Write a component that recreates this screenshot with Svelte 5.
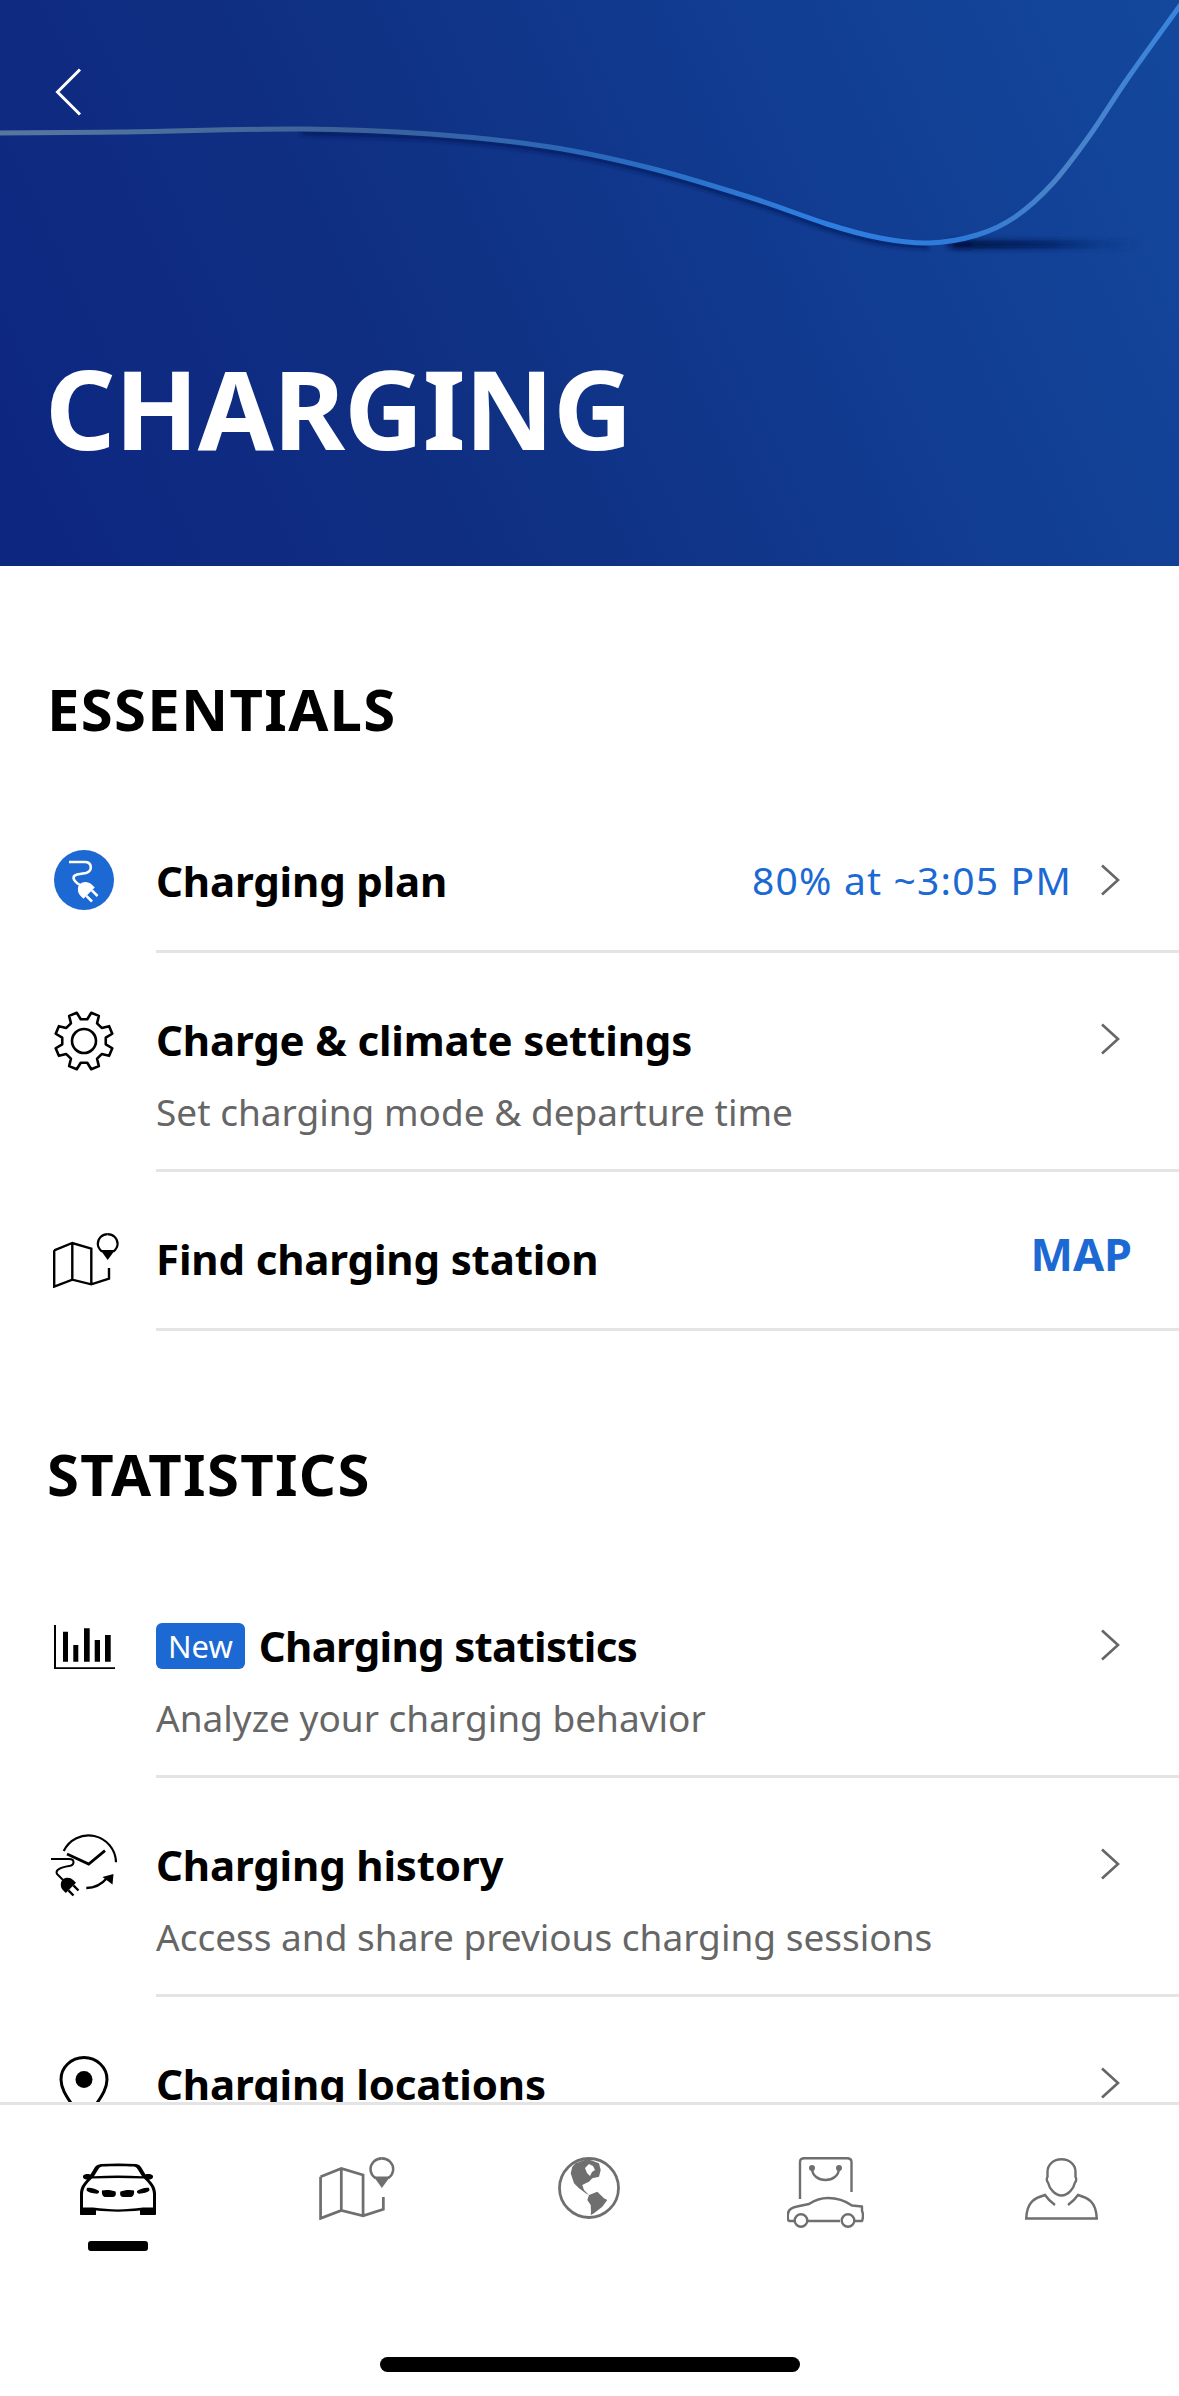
<script>
  const gearPts = [];
  const n = 8;
  for (let i = 0; i < n; i++) {
    const a = (i / n) * Math.PI * 2 + Math.PI / 8;
    const w = Math.PI / n;
    const p = (r, t) => `${(30 + r * Math.cos(t)).toFixed(2)} ${(30 + r * Math.sin(t)).toFixed(2)}`;
    gearPts.push(`${i ? 'L' : 'M'}${p(22, a - w * 0.62)} L${p(29.2, a - w * 0.36)} L${p(29.2, a + w * 0.36)} L${p(22, a + w * 0.62)}`);
  }
  const gear = gearPts.join(' ') + ' Z';

  const cablePts = [[-10,133],[120,132],[301,129],[430,134],[550,147],[650,168],[752,198],[827,224],[880,238],[929,243],[977,235],[1015,217],[1053,183],[1090,135],[1128,78],[1179,7],[1200,-23]];
  function smooth(pts) {
    let d = `M${pts[0][0]} ${pts[0][1]}`;
    for (let i = 0; i < pts.length - 1; i++) {
      const p0 = pts[Math.max(i - 1, 0)], p1 = pts[i], p2 = pts[i + 1], p3 = pts[Math.min(i + 2, pts.length - 1)];
      const c1 = [p1[0] + (p2[0] - p0[0]) / 6, p1[1] + (p2[1] - p0[1]) / 6];
      const c2 = [p2[0] - (p3[0] - p1[0]) / 6, p2[1] - (p3[1] - p1[1]) / 6];
      d += `C${c1[0].toFixed(1)} ${c1[1].toFixed(1)} ${c2[0].toFixed(1)} ${c2[1].toFixed(1)} ${p2[0]} ${p2[1]}`;
    }
    return d;
  }
  const cable = smooth(cablePts);
  const cableShadow = smooth(cablePts.slice(2, 10).map(([x, y]) => [x, y + 4]));
</script>

{#snippet chevron()}
  <svg class="chev" viewBox="0 0 20 32"><path d="M2 1.5 L18 16 L2 30.5" /></svg>
{/snippet}

{#snippet plug()}
  <path d="M-8 3H8V-1C8 -6 4 -10 0 -10C-4 -10 -8 -6 -8 -1Z" />
  <rect x="-5.2" y="3" width="2.6" height="8" />
  <rect x="2.6" y="3" width="2.6" height="8" />
{/snippet}

{#snippet mapIcon(cls, color)}
  <svg class={cls} viewBox="0 0 66 55" style="color:{color}">
    <path fill="none" stroke="currentColor" stroke-width="2.4" d="M1.2 17.3V53.6L19.3 46.7L38.3 51.3L56 45.7V35M1.2 17.3L19.3 10L38.3 15.7V51.3M19.3 10V46.7" />
    <path fill="none" stroke="currentColor" stroke-width="2.2" d="M54.7 1.2C49 1.2 44.8 5.6 44.8 10.8C44.8 14.2 46.5 16.6 49.2 18.6" />
    <path fill="none" stroke="currentColor" stroke-width="2.2" d="M54.7 1.2C60.4 1.2 64.6 5.6 64.6 10.8C64.6 14.2 62.9 16.6 60.2 18.6" />
    <path fill="currentColor" d="M47.5 17H62L54.7 27Z" />
  </svg>
{/snippet}

<div class="page">
  <div class="scroll">
    <header class="hero">
      <svg class="curve" viewBox="0 0 1179 566">
        <defs>
          <linearGradient id="cable" x1="0" x2="1179" y1="0" y2="0" gradientUnits="userSpaceOnUse">
            <stop offset="0" stop-color="#58779f" />
            <stop offset="0.3" stop-color="#3c6299" />
            <stop offset="0.5" stop-color="#2a68ba" />
            <stop offset="0.7" stop-color="#2f7fe2" />
            <stop offset="0.82" stop-color="#2f7ad8" />
            <stop offset="0.9" stop-color="#4a82c8" />
            <stop offset="1" stop-color="#3a84de" />
          </linearGradient>
          <filter id="blur" x="-20%" y="-300%" width="140%" height="700%"><feGaussianBlur stdDeviation="4 2.5" /></filter>
          <filter id="blur2" x="-20%" y="-50%" width="140%" height="200%"><feGaussianBlur stdDeviation="2.2" /></filter>
          <filter id="blur3" x="-5%" y="-20%" width="110%" height="140%"><feGaussianBlur stdDeviation="0.5" /></filter>
          <linearGradient id="shade" x1="955" x2="1140" y1="0" y2="0" gradientUnits="userSpaceOnUse">
            <stop offset="0" stop-color="#031040" stop-opacity="1" />
            <stop offset="0.5" stop-color="#071d5c" stop-opacity="0.75" />
            <stop offset="1" stop-color="#0d2f7a" stop-opacity="0" />
          </linearGradient>
        </defs>
        <path d="M950 240H1140V249H950Z" fill="url(#shade)" filter="url(#blur)" />
        <path d={cableShadow} fill="none" stroke="#06185a" stroke-opacity="0.75" stroke-width="5" filter="url(#blur2)" />
        <path d={cable} fill="none" stroke="url(#cable)" stroke-width="5" filter="url(#blur3)" />
      </svg>
      <svg class="back" viewBox="0 0 27 48"><path d="M25 1.5 L2.5 24 L25 46.5" /></svg>
      <h1>CHARGING</h1>
    </header>

    <main>
      <h2>ESSENTIALS</h2>

      <div class="row short">
        <div class="ic plugic">
          <svg class="s60" viewBox="0 0 60 60">
            <circle cx="30" cy="30" r="30" fill="#1c69d4" />
            <path d="M15 12H31C38 12 39 21 32 23L23 24.5C18 26 18 30 26 35" fill="none" stroke="#fff" stroke-width="2.6" />
            <g transform="translate(33 41) rotate(-45)" fill="#fff">{@render plug()}</g>
          </svg>
        </div>
        <div class="body"><div class="title">Charging plan</div></div>
        <span class="value">80% at ~3:05 PM</span>
        {@render chevron()}
      </div>

      <div class="row tall">
        <div class="ic">
          <svg class="s60" viewBox="0 0 60 60"><path d={gear} fill="none" stroke="#000" stroke-width="2.6" stroke-linejoin="round" /><circle cx="30" cy="30" r="12" fill="none" stroke="#000" stroke-width="2.6" /></svg>
        </div>
        <div class="body">
          <div class="title">Charge &amp; climate settings</div>
          <div class="sub">Set charging mode &amp; departure time</div>
        </div>
        {@render chevron()}
      </div>

      <div class="row short">
        <div class="ic">{@render mapIcon('rowmap', '#000')}</div>
        <div class="body"><div class="title">Find charging station</div></div>
        <span class="map">MAP</span>
      </div>

      <h2>STATISTICS</h2>

      <div class="row tall">
        <div class="ic">
          <svg class="bars" viewBox="0 0 61 44">
            <path d="M1 0V43.2H61" fill="none" stroke="#000" stroke-width="2" />
            <path d="M9 6.7h5v30h-5zM19.3 20h5v16.7h-5zM30 3.3h5.7v33.4H30zM40.7 15h5.3v21.7h-5.3zM51 10h5.7v26.7H51z" fill="#000" />
          </svg>
        </div>
        <div class="body">
          <div class="title"><span class="badge">New</span><span class="tight">Charging statistics</span></div>
          <div class="sub">Analyze your charging behavior</div>
        </div>
        {@render chevron()}
      </div>

      <div class="row tall">
        <div class="ic">
          <svg class="hist" viewBox="0 0 66 66">
            <path d="M12.7 17A27.5 27.5 0 0 1 65 28.3" fill="none" stroke="#000" stroke-width="2.2" />
            <path d="M16 20L37.7 30L54 16.7" fill="none" stroke="#000" stroke-width="2.8" />
            <path d="M35.3 54C44 54 51 50 56 44" fill="none" stroke="#000" stroke-width="2.4" />
            <path d="M51.5 43L62.5 40L61.5 50.5Z" fill="#000" />
            <path d="M0 25H18C24 25 24 31 18 32C9 33.5 4 36 6 40L12 46" fill="none" stroke="#000" stroke-width="2" />
            <g transform="translate(18 52) rotate(-45) scale(.9)" fill="#000">{@render plug()}</g>
          </svg>
        </div>
        <div class="body">
          <div class="title">Charging history</div>
          <div class="sub">Access and share previous charging sessions</div>
        </div>
        {@render chevron()}
      </div>

      <div class="row tall last">
        <div class="ic">
          <svg class="pin" viewBox="0 0 50 66">
            <path d="M25 1.5C12 1.5 2 11.5 2 23.5C2 33 8 41 14 50L25 66L36 50C42 41 48 33 48 23.5C48 11.5 38 1.5 25 1.5Z" fill="none" stroke="#000" stroke-width="3" />
            <circle cx="25" cy="23.5" r="8.5" fill="#000" />
          </svg>
        </div>
        <div class="body"><div class="title">Charging locations</div></div>
        {@render chevron()}
      </div>
    </main>
  </div>

  <nav class="tabs">
    <div class="tab">
      <svg class="t-car" viewBox="0 0 76 52">
        <path fill-rule="evenodd" d="M21 1C32 .2 45 .2 56 1C58.5 1.3 60 2.6 61 4L65.5 11.6C67 10.6 72 10.7 73 13C73.5 15 71.5 16.5 69 16.5C72 20 75.5 23 76 30V51C76 51.6 75.6 52 75 52H61C60 52 60 51.5 60 51V47.5C46 49 30 49 16 47.5V51C16 51.5 16 52 15 52H1C.4 52 0 51.6 0 51V30C.5 23 4 20 7 16.5C4.5 16.5 2.5 15 3 13C4 10.7 9 10.6 10.5 11.6L15 4C16 2.6 18.5 1.3 21 1ZM22.5 3.6C20.5 3.8 19.5 4.6 18.5 6L14 13.2C30 12.4 46 12.4 62 13.2L57.5 6C56.5 4.6 55.5 3.8 53.5 3.6C44 3 32 3 22.5 3.6ZM12 15.6C8 19.6 3.4 23.5 3 31V44.6H13C30 47 46 47 63 44.6H73V31C72.6 23.5 68 19.6 64 15.6C46 14.8 30 14.8 12 15.6Z" />
        <path d="M7 25C10 24 16 26 19 28C19.5 30 18 31 15 30.5C11 30 7 29 6.5 27ZM69 25C66 24 60 26 57 28C56.5 30 58 31 61 30.5C65 30 69 29 69.5 27ZM22 27.5C26 26.5 32 27 35.5 28.5C36.5 31 35.5 34 33 34H25C22.5 34 21.5 30 22 27.5ZM54 27.5C50 26.5 44 27 40.5 28.5C39.5 31 40.5 34 43 34H51C53.5 34 54.5 30 54 27.5Z" />
      </svg>
      <span class="ind"></span>
    </div>
    <div class="tab">{@render mapIcon('t-map', '#6f6f6f')}</div>
    <div class="tab">
      <svg class="t-globe" viewBox="0 0 62 62">
        <circle cx="31" cy="31" r="29.5" fill="#fff" stroke="#6f6f6f" stroke-width="2.8" />
        <path fill="#6f6f6f" fill-rule="evenodd" d="M17.7 6.3L29.3 2L41 6.3L42.7 13L41 19.7L34.3 21.3L31 24.7L27.7 26.3L24.3 28L26 33L31 38L27.7 36.3L21 31.3L16 26.3L12.7 16.3L14.3 9.7ZM27 11L31 7L35 9L37 13L34 15L32 19L29 16Z" />
        <path fill="#6f6f6f" d="M31 38L39.3 34.7L46 41.3L49.3 43L44.3 49.7L36 56.3L32.7 58L33 55L32.7 48L29.3 43Z" />
      </svg>
    </div>
    <div class="tab">
      <svg class="t-bag" viewBox="0 0 77 71" fill="none" stroke="#6f6f6f" stroke-width="2.4">
        <path d="M13 42V5C13 2.5 15 1.2 17.5 1.2H60C62.5 1.2 64.5 2.5 64.5 5V35" />
        <path d="M25 11C25 27 52 27 52 11" />
        <circle cx="25" cy="11" r="1.8" fill="#6f6f6f" /><circle cx="52" cy="11" r="1.8" fill="#6f6f6f" />
        <path d="M8 64H2.5C.8 64 .8 62 .8 58C.8 53 4 50.5 10 49.5L22 47C28 43 33 41 41 41C52 41 60 45 65 48.5L75 49.5V54C76.5 56 76 62 75 64H68M21 64H53" stroke-linejoin="round" />
        <circle cx="14" cy="63.5" r="6.3" /><circle cx="61" cy="63.5" r="6.3" />
      </svg>
    </div>
    <div class="tab">
      <svg class="t-user" viewBox="0 0 73 62" fill="none" stroke="#6f6f6f" stroke-width="2.4">
        <path d="M36.5 1.2C28.5 1.2 22.5 6.5 22.5 14V19C21.5 20 21.5 23 23 24.5C24.5 31 30 37.5 36.5 37.5C43 37.5 48.5 31 50 24.5C51.5 23 51.5 20 50.5 19V14C50.5 6.5 44.5 1.2 36.5 1.2Z" />
        <path d="M30 47C26 44 22 40 20 37C10 40 2 43 1.2 60.5H71.8C71 43 63 40 53 37C51 40 47 44 43 47" />
      </svg>
    </div>
    <div class="home"></div>
  </nav>
</div>

<style>
  :global(body) { margin: 0; background: #fff; }
  .page {
    width: 1179px;
    height: 2396px;
    display: flex;
    flex-direction: column;
    overflow: hidden;
    font-family: "Noto Sans", sans-serif;
    color: #000;
    background: #fff;
  }
  .scroll { flex: 1; min-height: 0; overflow: hidden; }
  .hero {
    position: relative;
    height: 566px;
    background: linear-gradient(65deg, #0d2680 0%, #0f2f82 35%, #113d92 70%, #13489d 100%);
    display: flex;
    align-items: flex-end;
    padding: 0 45px;
    box-sizing: border-box;
  }
  .curve { position: absolute; inset: 0; width: 100%; height: 100%; }
  .back { position: absolute; left: 55px; top: 68px; width: 27px; height: 48px; fill: none; stroke: #fff; stroke-width: 3; }
  h1 {
    position: relative;
    margin: 0 0 99px;
    font-size: 110px;
    line-height: 120px;
    font-weight: 700;
    color: #fff;
    letter-spacing: -1px;
  }
  h2 {
    margin: 0;
    padding: 110px 47px 52px;
    font-size: 58px;
    line-height: 66px;
    font-weight: 700;
    letter-spacing: 1.3px;
  }
  .row {
    position: relative;
    display: flex;
    align-items: flex-start;
    box-sizing: border-box;
    padding-right: 39px;
  }
  .row.short { height: 159px; }
  .row.tall { height: 219px; }
  .row::after {
    content: "";
    position: absolute;
    left: 156px;
    right: 0;
    bottom: 0;
    height: 3px;
    background: #e4e4e4;
  }
  .ic { width: 156px; flex: none; display: flex; justify-content: center; padding: 58px 0 0 12px; box-sizing: border-box; }
  .plugic { padding-top: 56px; }
  .ic > svg { display: block; }
  .s60 { width: 60px; height: 60px; }
  :global(.rowmap) { width: 66px; height: 55px; margin: 3px 0 0 3px; }
  .bars { width: 61px; height: 44px; margin-top: 8px; }
  .hist { width: 66px; height: 66px; margin-top: -2px; }
  .pin { width: 50px; height: 66px; margin-top: 1px; }
  .body { flex: 1; min-width: 0; padding-top: 62.5px; }
  .title { font-size: 42px; line-height: 48px; font-weight: 700; display: flex; align-items: center; letter-spacing: -0.15px; }
  .tight { letter-spacing: -0.7px; }
  .sub { font-size: 37px; line-height: 48px; color: #666; margin-top: 24px; }
  .value { font-size: 39px; line-height: 48px; letter-spacing: 1.2px; color: #1c69d4; margin: 62px 28px 0 0; }
  .map { font-size: 45px; line-height: 48px; font-weight: 700; color: #1c69d4; margin: 58px 8px 0 0; }
  .chev { width: 20px; height: 32px; margin: 70px 20px 0 0; fill: none; stroke: #666; stroke-width: 2.6; flex: none; }
  .badge {
    background: #1c69d4;
    color: #fff;
    font-size: 31px;
    line-height: 46px;
    font-weight: 400;
    letter-spacing: 0;
    padding: 0 12px;
    border-radius: 6px;
    margin-right: 14px;
  }
  .tabs {
    position: relative;
    flex: none;
    height: 294px;
    border-top: 3px solid #e4e4e4;
    box-sizing: border-box;
    background: #fff;
    display: grid;
    grid-template-columns: repeat(5, 1fr);
    align-items: start;
  }
  .tab { display: flex; flex-direction: column; align-items: center; padding-top: 52px; }
  .tab svg { display: block; fill: #000; }
  .t-car { width: 76px; height: 52px; margin-top: 6px; }
  :global(.t-map) { width: 76px; height: 63px; margin-left: 6px; }
  .t-globe { width: 62px; height: 62px; }
  .t-bag { width: 77px; height: 71px; }
  .t-bag, .t-user { fill: none !important; }
  .t-user { width: 73px; height: 62px; margin-top: 1px; }
  .ind { width: 60px; height: 10px; border-radius: 3px; background: #000; margin-top: 26px; }
  .home {
    position: absolute;
    left: 380px;
    top: 252px;
    width: 420px;
    height: 15px;
    border-radius: 8px;
    background: #000;
  }
</style>
